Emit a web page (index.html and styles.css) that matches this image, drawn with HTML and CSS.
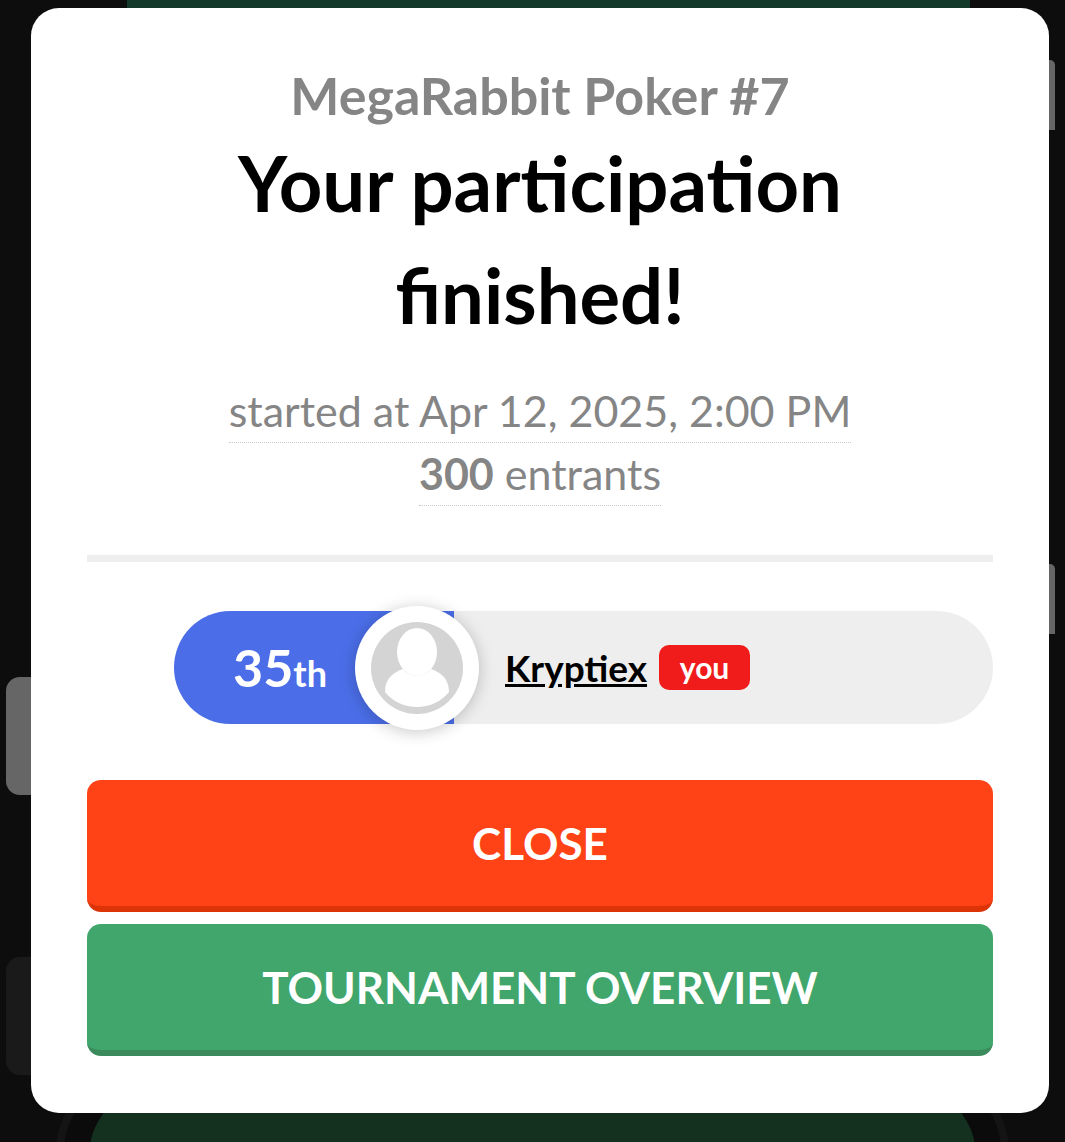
FILE: index.html
```html
<!DOCTYPE html>
<html lang="en">
<head>
    <meta charset="UTF-8">
    <meta name="viewport" content="width=device-width, initial-scale=1.0">
    <title>Tournament result</title>
    <link rel="stylesheet" href="styles.css">
</head>
<body>
    <!-- Poker table behind the dialog -->
    <div class="backdrop">
        <div class="table-top"></div>
        <div class="table-bottom"></div>
        <div class="seat seat-light"></div>
        <div class="seat seat-dark"></div>
        <div class="sliver sliver-one"></div>
        <div class="sliver sliver-two"></div>
    </div>

    <div class="modal">
        <h2 class="event-name">MegaRabbit Poker #7</h2>
        <h1 class="headline">Your participation finished!</h1>

        <div class="meta">
            <span class="meta-line">started at Apr 12, 2025, 2:00 PM</span>
            <span class="meta-line"><b>300</b> entrants</span>
        </div>

        <hr class="divider">

        <div class="rank-row">
            <div class="rank">35<small>th</small></div>
            <div class="avatar">
                <svg viewBox="0 0 92 92" width="92" height="92">
                    <circle cx="46" cy="46" r="46" fill="#d4d4d4"/>
                    <ellipse cx="46" cy="30" rx="20" ry="24" fill="#fff"/>
                    <path d="M14 70 C14 56 23 50 32 47 C38 56 54 56 60 47 C69 50 78 56 78 70 C70 80 58 85 46 85 C34 85 22 80 14 70 Z" fill="#fff"/>
                </svg>
            </div>
            <div class="player">
                <a class="player-name" href="#">Kryptiex</a>
                <span class="you-badge">you</span>
            </div>
        </div>

        <button class="action action-close">CLOSE</button>
        <button class="action action-overview">TOURNAMENT OVERVIEW</button>
    </div>
</body>
</html>
```

FILE: styles.css
```css
* {
    margin: 0;
    padding: 0;
    box-sizing: border-box;
}

body {
    font-family: "Lato", "Noto Sans", sans-serif;
    background: #0d0d0d;
    height: 1142px;
    overflow: hidden;
    padding: 8px 16px 0 31px;
    position: relative;
}

.backdrop {
    position: absolute;
    inset: 0;
    overflow: hidden;
}

.table-top {
    position: absolute;
    left: 127px;
    top: -40px;
    width: 843px;
    height: 48px;
    background: #12392a;
}

.table-bottom {
    position: absolute;
    left: 90px;
    top: 1000px;
    width: 885px;
    height: 300px;
    border-radius: 50%;
    background: #14301f;
    box-shadow: 0 0 0 26px #0b0b0b, 0 0 0 34px #141414;
}

.seat {
    position: absolute;
    left: 6px;
    width: 60px;
    height: 118px;
    border-radius: 14px;
}

.seat-light {
    top: 677px;
    background: #666;
}

.seat-dark {
    top: 957px;
    background: #1a1a1a;
}

.sliver {
    position: absolute;
    left: 1040px;
    width: 15px;
    height: 70px;
    background: #666;
    border-radius: 0 5px 0 0;
}

.sliver-one {
    top: 60px;
}

.sliver-two {
    top: 420px;
    top: 564px;
}

.modal {
    position: relative;
    width: 1018px;
    height: 1105px;
    background: #fff;
    border-radius: 28px;
    padding: 56px 56px 0;
    text-align: center;
}

.event-name {
    font-size: 52px;
    font-weight: 700;
    line-height: 62px;
    color: #858585;
}

.headline {
    font-size: 76px;
    font-weight: 700;
    line-height: 112px;
    color: #000;
    width: 700px;
    margin: 1px auto 0;
}

.meta {
    display: flex;
    flex-direction: column;
    align-items: center;
    margin-top: 29px;
    color: #858585;
    font-size: 43px;
}

.meta-line {
    line-height: 62px;
    border-bottom: 1px dotted #ccc;
}

.divider {
    border: none;
    height: 7px;
    background: #eee;
    margin-top: 49px;
}

.rank-row {
    display: flex;
    align-items: center;
    height: 113px;
    margin: 49px 0 0 87px;
    background: #eee;
    border-radius: 57px;
}

.rank {
    width: 280px;
    height: 113px;
    flex-shrink: 0;
    background: #4b6ee8;
    border-radius: 57px 0 0 57px;
    color: #fff;
    font-size: 52px;
    font-weight: 700;
    line-height: 113px;
    padding-left: 59px;
    text-align: left;
}

.rank small {
    font-size: 36px;
}

.avatar {
    width: 124px;
    height: 124px;
    flex-shrink: 0;
    margin-left: -99px;
    background: #fff;
    border-radius: 50%;
    box-shadow: 0 2px 16px rgba(0, 0, 0, 0.22);
    display: flex;
    align-items: center;
    justify-content: center;
}

.player {
    display: flex;
    align-items: center;
    gap: 12px;
    margin-left: 26px;
}

.player-name {
    color: #000;
    font-size: 37px;
    font-weight: 700;
}

.you-badge {
    background: #f01c1c;
    color: #fff;
    font-size: 30px;
    font-weight: 700;
    line-height: 45px;
    width: 91px;
    border-radius: 10px;
}

.action {
    display: block;
    width: 100%;
    height: 132px;
    border: none;
    border-radius: 14px;
    color: #fff;
    font-family: inherit;
    font-size: 44px;
    font-weight: 700;
    cursor: pointer;
}

.action-close {
    margin-top: 56px;
    background: #ff4316;
    border-bottom: 6px solid #dc3407;
}

.action-overview {
    margin-top: 12px;
    background: #40a66c;
    border-bottom: 6px solid #3a8a5c;
}
```
